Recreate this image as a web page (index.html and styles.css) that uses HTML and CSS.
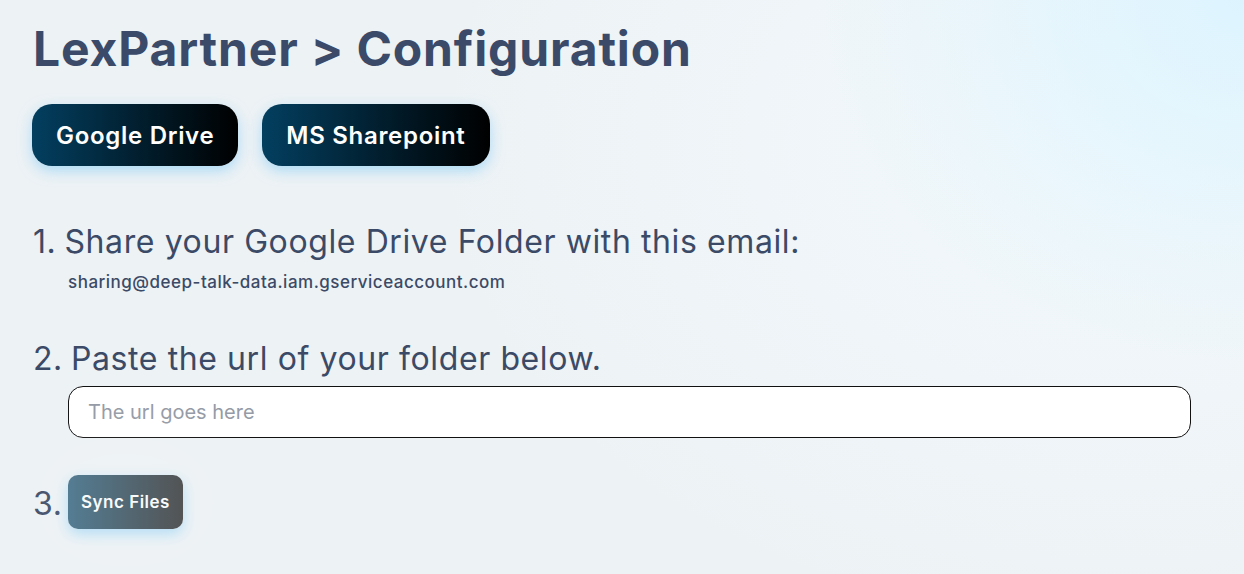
FILE: index.html
```html
<!DOCTYPE html>
<html lang="en">
<head>
<meta charset="utf-8">
<title>LexPartner &gt; Configuration</title>
<link rel="stylesheet" href="styles.css">
</head>
<body>
<main class="page">
  <h1 class="title">LexPartner &gt; Configuration</h1>
  <div class="tabs">
    <button class="btn btn-lg">Google Drive</button>
    <button class="btn btn-lg">MS Sharepoint</button>
  </div>
  <ol class="steps">
    <li class="step step-1">
      <div class="step-head"><span class="num">1.</span><span>Share your Google Drive Folder with this email:</span></div>
      <div class="step-body"><p class="email">sharing@deep-talk-data.iam.gserviceaccount.com</p></div>
    </li>
    <li class="step step-2">
      <div class="step-head"><span class="num">2.</span><span>Paste the url of your folder below.</span></div>
      <div class="step-body"><input class="url" type="text" placeholder="The url goes here"></div>
    </li>
    <li class="step step-3">
      <div class="step-head step-row"><span class="num">3.</span><button class="btn btn-sm" disabled>Sync Files</button></div>
    </li>
  </ol>
</main>
</body>
</html>
```
FILE: styles.css
```css
html, body {
  margin: 0;
  height: 100%;
}
body {
  font-family: Inter, "Noto Sans", sans-serif;
  color: #3b4a66;
  background-color: #edf2f5;
  background-image:
    radial-gradient(ellipse 420px 360px at 100% 0%, rgba(220, 244, 255, 0.95), rgba(230, 245, 252, 0) 100%),
    radial-gradient(ellipse 700px 500px at 90% 25%, rgba(242, 249, 252, 0.9), rgba(242, 249, 252, 0) 100%);
  overflow: hidden;
}
.page {
  padding: 20px 32px 0 33px;
}
.title {
  margin: 0;
  font-size: 48px;
  font-weight: 700;
  line-height: 58px;
  color: #3b4a68;
  letter-spacing: 0.85px;
}
.tabs {
  display: flex;
  gap: 24px;
  margin-top: 26px;
  margin-left: -1px;
}
.btn {
  border: none;
  font-family: Inter, "Noto Sans", sans-serif;
  color: #fff;
  background: linear-gradient(90deg, #033f60 0%, #000 100%);
  box-shadow: 0 5px 14px rgba(120, 200, 245, 0.55);
  cursor: pointer;
}
.btn-lg {
  height: 62px;
  padding: 0 24px;
  border-radius: 20px;
  font-size: 24px;
  font-weight: 600;
  letter-spacing: 0.7px;
}
.btn-sm {
  height: 54px;
  padding: 0 13px;
  border-radius: 10px;
  font-size: 17px;
  font-weight: 600;
  letter-spacing: 0.5px;
  opacity: 0.65;
  box-shadow: 0 5px 14px rgba(120, 200, 245, 0.75), 0 0 80px 30px rgba(255, 255, 255, 0.25);
}
.steps {
  list-style: none;
  margin: 56px 0 0;
  padding: 0;
}
.step-head {
  display: flex;
  font-size: 32px;
  line-height: 39px;
  letter-spacing: 0.6px;
  color: #3b4a66;
}
.num {
  flex: none;
  margin-right: 8px;
}
.step-body {
  margin-left: 35px;
}
.email {
  margin: 12px 0 0;
  font-size: 17px;
  font-weight: 500;
  line-height: 19px;
  letter-spacing: 0.5px;
  color: #3b4a66;
}
.step-2 {
  margin-top: 47px;
}
.step-2 .step-body {
  margin-top: 8px;
}
.url {
  display: block;
  box-sizing: border-box;
  width: 1123px;
  height: 52px;
  padding: 0 19px;
  border: 1px solid #111;
  border-radius: 15px;
  background: #fff;
  font-family: Inter, "Noto Sans", sans-serif;
  font-size: 20px;
  color: #333;
  outline: none;
}
.url::placeholder {
  color: #959ba6;
}
.step-3 {
  margin-top: 37px;
}
.step-row {
  align-items: center;
}
.step-row .num {
  width: 35px;
  margin-right: 0;
  padding-top: 2px;
}
```
